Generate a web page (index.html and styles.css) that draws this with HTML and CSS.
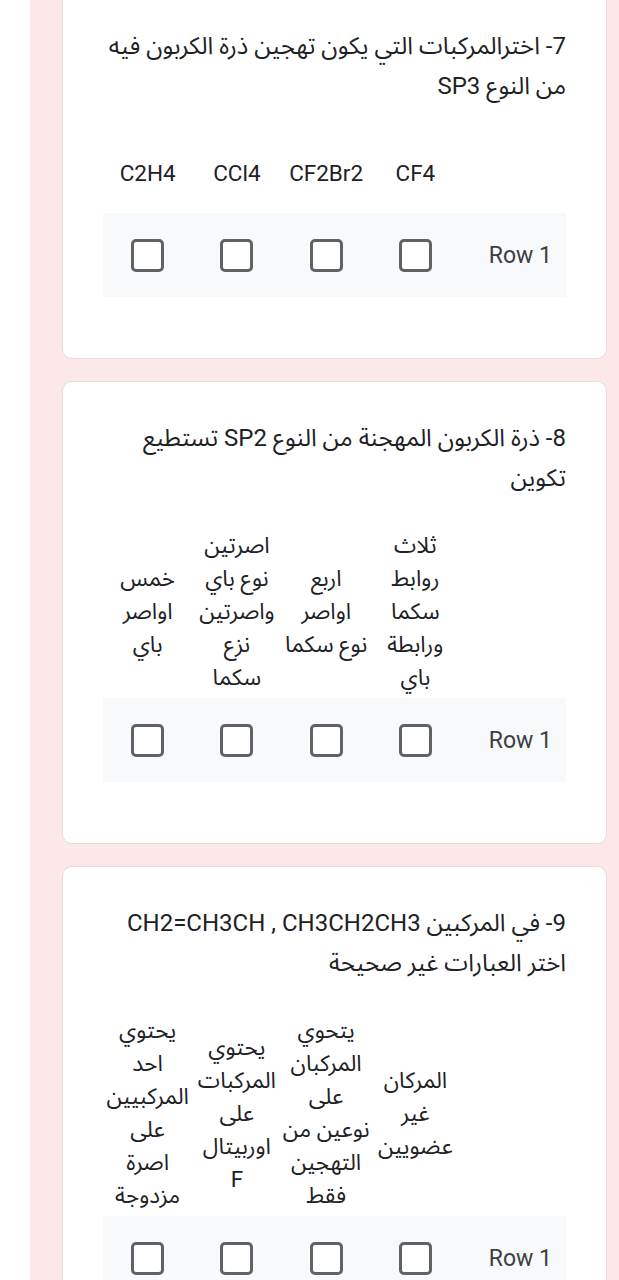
FILE: index.html
```html
<!DOCTYPE html>
<html lang="ar" dir="rtl">
<head>
    <meta charset="UTF-8">
    <meta name="viewport" content="width=device-width, initial-scale=1.0">
    <title>اختبار التهجين</title>
    <link rel="stylesheet" href="styles.css">
</head>
<body>

    <div class="page">
        <div class="form-list">

            <!-- Question 7 -->
            <div class="card">
                <div class="question">7- اخترالمركبات التي يكون تهجين ذرة الكربون فيه من النوع SP3</div>
                <div class="grid">
                    <div class="grid-head">
                        <div class="cell row-label"></div>
                        <div class="cell col-title">CF4</div>
                        <div class="cell col-title">CF2Br2</div>
                        <div class="cell col-title">CCl4</div>
                        <div class="cell col-title">C2H4</div>
                    </div>
                    <div class="grid-row">
                        <div class="cell row-label">Row 1</div>
                        <div class="cell"><span class="checkbox"></span></div>
                        <div class="cell"><span class="checkbox"></span></div>
                        <div class="cell"><span class="checkbox"></span></div>
                        <div class="cell"><span class="checkbox"></span></div>
                    </div>
                </div>
            </div>

            <!-- Question 8 -->
            <div class="card">
                <div class="question">8- ذرة الكربون المهجنة من النوع SP2 تستطيع تكوين</div>
                <div class="grid">
                    <div class="grid-head">
                        <div class="cell row-label"></div>
                        <div class="cell col-title">ثلاث<br>روابط<br>سكما<br>ورابطة<br>باي</div>
                        <div class="cell col-title">اربع<br>اواصر<br>نوع سكما</div>
                        <div class="cell col-title">اصرتين<br>نوع باي<br>واصرتين<br>نزع<br>سكما</div>
                        <div class="cell col-title">خمس<br>اواصر<br>باي</div>
                    </div>
                    <div class="grid-row">
                        <div class="cell row-label">Row 1</div>
                        <div class="cell"><span class="checkbox"></span></div>
                        <div class="cell"><span class="checkbox"></span></div>
                        <div class="cell"><span class="checkbox"></span></div>
                        <div class="cell"><span class="checkbox"></span></div>
                    </div>
                </div>
            </div>

            <!-- Question 9 -->
            <div class="card">
                <div class="question">9- في المركبين CH2=CH3CH , CH3CH2CH3 اختر العبارات غير صحيحة</div>
                <div class="grid">
                    <div class="grid-head">
                        <div class="cell row-label"></div>
                        <div class="cell col-title">المركان<br>غير<br>عضويين</div>
                        <div class="cell col-title">يتحوي<br>المركبان<br>على<br>نوعين من<br>التهجين<br>فقط</div>
                        <div class="cell col-title">يحتوي<br>المركبات<br>على<br>اوربيتال<br>F</div>
                        <div class="cell col-title">يحتوي<br>احد<br>المركبيين<br>على<br>اصرة<br>مزدوجة</div>
                    </div>
                    <div class="grid-row">
                        <div class="cell row-label">Row 1</div>
                        <div class="cell"><span class="checkbox"></span></div>
                        <div class="cell"><span class="checkbox"></span></div>
                        <div class="cell"><span class="checkbox"></span></div>
                        <div class="cell"><span class="checkbox"></span></div>
                    </div>
                </div>
            </div>

        </div>
    </div>
</body>
</html>
```

FILE: styles.css
```css
html, body {
    margin: 0;
    padding: 0;
    background-color: #fff;
}
body {
    font-family: Roboto, "Noto Sans Arabic", "Noto Naskh Arabic", "DejaVu Sans", sans-serif;
    color: #202124;
    overflow: hidden;
}
.page {
    margin-left: 30px; /* white strip on the left */
    min-height: 1280px;
    background-color: #fce8e9;
    padding: 0 12px 0 0;
}
.form-list {
    display: flex;
    flex-direction: column;
    gap: 22px;
    margin-top: -11px; /* first card is cut off at the top */
    margin-left: 32px;
}
.card {
    background-color: #fff;
    border: 1px solid #e6dcdc;
    border-radius: 10px;
    padding: 36px 40px 61px 40px;
}
.question {
    font-size: 24px;
    line-height: 40px;
    color: #202124;
    margin-bottom: 26px;
}
.grid-head, .grid-row {
    display: grid;
    grid-template-columns: 106px repeat(4, minmax(0, 1fr));
}
.grid-head {
    box-sizing: border-box;
    min-height: 81px;
    padding: 5px 0 4px 0;
    align-items: center;
}
.grid-row {
    background-color: #f8f9fa;
    height: 84px;
    align-items: center;
}
.cell {
    display: flex;
    justify-content: center;
    align-items: center;
}
.col-title {
    text-align: center;
    white-space: nowrap; /* lines are broken by hand */
    font-size: 22.5px;
    line-height: 33px;
    color: #202124;
}
.row-label {
    justify-content: flex-start;
    padding-right: 14px;
    font-size: 23px;
    color: #3c4043;
}
.checkbox {
    display: inline-block;
    width: 33px;
    height: 33px;
    box-sizing: border-box;
    border: 3px solid #5f6368;
    border-radius: 5px;
    background-color: #fff;
}
```
